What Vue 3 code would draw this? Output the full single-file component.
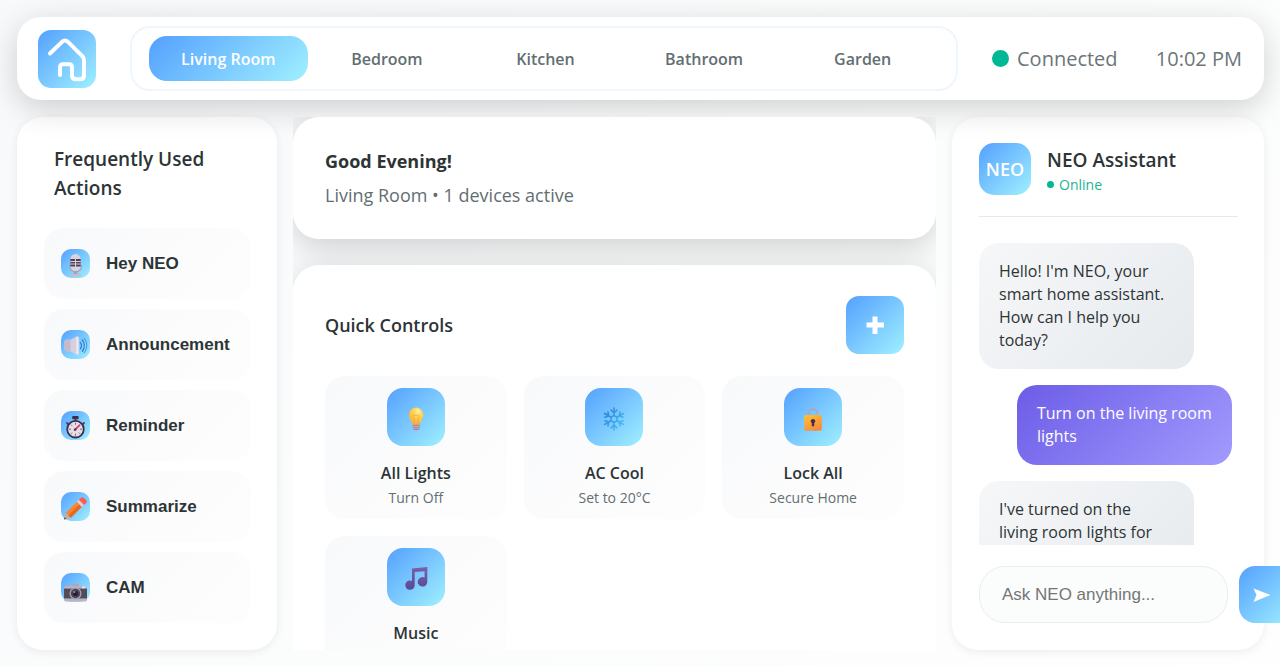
<script setup>
import { ref } from 'vue'

const rooms = ['Living Room', 'Bedroom', 'Kitchen', 'Bathroom', 'Garden']
const room = ref('Living Room')
const draft = ref('')

const actions = [
  { icon: 'mic', label: 'Hey NEO' },
  { icon: 'speaker', label: 'Announcement' },
  { icon: 'timer', label: 'Reminder' },
  { icon: 'pencil', label: 'Summarize' },
  { icon: 'camera', label: 'CAM' },
]

const controls = [
  { icon: 'bulb', title: 'All Lights', note: 'Turn Off' },
  { icon: 'snow', title: 'AC Cool', note: 'Set to 20°C' },
  { icon: 'lock', title: 'Lock All', note: 'Secure Home' },
  { icon: 'music', title: 'Music' },
]

const messages = [
  { from: 'neo', text: "Hello! I'm NEO, your smart home assistant. How can I help you today?" },
  { from: 'user', text: 'Turn on the living room lights' },
  { from: 'neo', text: "I've turned on the\nliving room lights for you." },
]
</script>

<template>
  <div class="app">
    <header class="topbar">
      <div class="logo">
        <svg viewBox="0 0 58 58" fill="none" stroke="#fff" stroke-width="4" stroke-linecap="round" stroke-linejoin="round">
          <path d="M12 23.5 24.3 11.6Q27 9.4 29.7 11.6L44.3 26.2Q46 28 46 30.5V45.5Q46 49.3 42.2 49.3H38Q34 49.3 34 45.5V37.5Q34 34.3 31 34.3H25Q22 34.3 22 37.5V45" />
        </svg>
      </div>
      <nav class="tabs">
        <button v-for="r in rooms" :key="r" class="tab" :class="{ active: r === room }" @click="room = r">{{ r }}</button>
      </nav>
      <div class="status">
        <span class="connection"><i class="dot"></i>Connected</span>
        <span>10:02 PM</span>
      </div>
    </header>

    <main class="columns">
      <aside class="panel sidebar">
        <h2>Frequently Used Actions</h2>
        <button v-for="a in actions" :key="a.label" class="action">
          <span class="action-icon">
            <svg v-if="a.icon === 'mic'" viewBox="0 0 29 29">
              <path d="M8.5 27.2q0-3 6-3t6 3z" fill="#c3bccb" />
              <rect x="12.8" y="20" width="3.4" height="5" fill="#a69fb0" />
              <path d="M8.500 16v1.500a6 5.500 0 0 0 12 0V16" fill="none" stroke="#a9a2b6" stroke-width="1.200" />
              <rect x="9.3" y="5" width="10.4" height="17" rx="5.2" fill="#d9d3dd" />
              <path d="M9.3 10h10.4v7.5H9.3z" fill="#4d4058" />
              <path d="M9.3 12.5h10.4M9.3 15h10.4M14.5 9.5V18" stroke="#d9d3dd" stroke-width="1" />
            </svg>
            <svg v-else-if="a.icon === 'speaker'" viewBox="0 0 29 29">
              <path d="M3.5 11.5q0-1.8 1.8-1.8h4.2l6.5-3.4q1.6-.5 1.6 1V24q0 1.6-1.6 1L9.500 21.300H5.300Q3.500 21.300 3.500 19.500z" fill="#d8cfde" />
              <path d="M3.500 11.500q0-1.800 1.800-1.800h4.200v11.600H5.300q-1.800 0-1.800-1.800z" fill="#c3bacb" />
              <path d="M15.300 7.500q1.500-1 2.300.500v15.600q-.8 1.300-2.300.3z" fill="#eee8f0" />
              <path d="M19.300 12.500q2.400 3 0 6.500M21.300 9.800q4.200 5.500 0 11.500" fill="none" stroke="#2676d2" stroke-width="1.200" stroke-linecap="round" />
              <path d="M23.200 8q5.600 7 0 15" fill="none" stroke="#3f93e4" stroke-width="1" stroke-linecap="round" />
            </svg>
            <svg v-else-if="a.icon === 'timer'" viewBox="0 0 29 29">
              <rect x="11.200" y="5" width="6.400" height="3.200" rx="1" fill="#373047" />
              <path d="M14.500 8v3M6 12l2 2M23 12l-2 2" stroke="#4b405c" stroke-width="1.800" stroke-linecap="round" />
              <circle cx="14.500" cy="18.200" r="8.300" fill="#e6dde9" stroke="#3a304a" stroke-width="1.800" />
              <path d="M14.500 11.700v2M14.500 22.700v2M8 18.200h2M19 18.200h2M9.900 13.600l1.200 1.200M9.900 22.800l1.200-1.200M19.100 22.800l-1.200-1.200" stroke="#64556f" stroke-width=".9" />
              <path d="m13.500 19.200 5.200-5" stroke="#e3355b" stroke-width="1.700" stroke-linecap="round" />
              <circle cx="14.300" cy="18.500" r="1.200" fill="#493955" />
            </svg>
            <svg v-else-if="a.icon === 'pencil'" viewBox="0 0 29 29">
              <path d="M3 27.500 5 21.500 9.300 25.700z" fill="#d9a783" />
              <path d="M3 27.500 3.700 25.200 5.400 26.800z" fill="#4d3850" />
              <path d="M4.400 21 17.200 8.400l5 5L9.600 26q-.6-2-2-2.400-.6-2-3.200-2.600z" fill="#f98732" />
              <path d="M7.200 23.500 19.800 11l2.400 2.400L9.600 26q-.6-2-2.400-2.500z" fill="#e76820" />
              <path d="m15.800 9.800 2.600-2.600 5.200 4.800-2.900 3z" fill="#d9d1df" />
              <path d="m17.800 7.800 2.200-2q1.300-1.300 2.700 0l2.600 2.500q1.300 1.300 0 2.600l-2.200 2.100z" fill="#fb5c4f" />
            </svg>
            <svg v-else viewBox="0 0 29 29">
              <path d="M5 13.500v-1.200h4v1.200M11 13l1.200-2.200h5L18.500 13" fill="#aea6b7" />
              <rect x="3" y="13" width="23" height="15.500" rx="1.800" fill="#b9b3c2" />
              <path d="M3 15.600h23v9.800H3z" fill="#514c58" />
              <rect x="21" y="13.600" width="3.500" height="1.600" rx=".6" fill="#e9e3ed" />
              <circle cx="14.500" cy="20.500" r="6" fill="#a8a0b2" />
              <circle cx="14.500" cy="20.500" r="4.700" fill="#4b4458" />
              <circle cx="14.500" cy="20.500" r="2.600" fill="#252033" />
              <circle cx="13.300" cy="19" r="1.100" fill="#9b8fb0" />
            </svg>
          </span>
          {{ a.label }}
        </button>
      </aside>

      <section class="center">
        <div class="card greeting">
          <h1>Good Evening!</h1>
          <p>{{ room }} • 1 devices active</p>
        </div>
        <div class="card quick">
          <div class="quick-head">
            <h2>Quick Controls</h2>
            <button class="add" aria-label="Add control">
              <svg viewBox="0 0 58 58"><path d="M26.500 20.500h5v6h6.500v5h-6.500v6.500h-5v-6.500h-6v-5h6z" fill="#fff" /></svg>
            </button>
          </div>
          <div class="grid">
            <button v-for="c in controls" :key="c.title" class="tile">
              <span class="tile-icon">
                <svg v-if="c.icon === 'bulb'" viewBox="0 0 58 58">
                  <defs>
                    <radialGradient id="bulb-glass" cx=".62" cy=".25" r=".75">
                      <stop offset="0" stop-color="#fff5b5" /><stop offset=".35" stop-color="#ffd75b" /><stop offset="1" stop-color="#f7ae37" />
                    </radialGradient>
                  </defs>
                  <path d="M21.800 26.800a7.300 7.300 0 0 1 14.600 0c0 4-2.800 5.200-3.500 10h-7.500c-.7-4.800-3.600-6-3.600-10z" fill="url(#bulb-glass)" />
                  <path d="M27.300 36v-6q-2-1.600-.5-3 1.300-.8 2.300.8 1-1.600 2.300-.8 1.500 1.400-.5 3v6" fill="none" stroke="#f5a030" stroke-width=".8" />
                  <path d="M25.500 36.800h7.300v3q0 2.500-3.600 2.500t-3.700-2.500z" fill="#a487a6" />
                  <path d="M25.500 38.300h7.300M25.700 40.200h6.900" stroke="#d2b7ca" stroke-width=".7" />
                </svg>
                <svg v-else-if="c.icon === 'snow'" viewBox="0 0 58 58" fill="none" stroke-width="1.600" stroke-linecap="round">
                  <defs>
                    <linearGradient id="ice" x1="-9" y1="-6" x2="10" y2="8" gradientUnits="userSpaceOnUse">
                      <stop stop-color="#2b82dd" /><stop offset="1" stop-color="#4cc4f6" />
                    </linearGradient>
                  </defs>
                  <path
                    transform="translate(29 31)"
                    stroke="url(#ice)"
                    d="M0-3.500V-11M0-6l-3-2.800M0-6l3-2.800M0 3.500V11M0 6l-3 2.800M0 6l3 2.800M3-1.800l6.500-3.700M5.200-3l.9-4M5.200-3l3.900 1.200M-3 1.800l-6.500 3.700M-5.200 3l-.9 4M-5.200 3l-3.900-1.200M3 1.800l6.500 3.700M5.200 3l.9 4M5.200 3l3.900-1.200M-3-1.800l-6.500-3.700M-5.200-3l-.9-4M-5.200-3l-3.900 1.200M0-3.500l3 1.700v3.600L0 3.500l-3-1.700v-3.600z"
                  />
                </svg>
                <svg v-else-if="c.icon === 'lock'" viewBox="0 0 58 58">
                  <defs>
                    <linearGradient id="brass" x1="0" y1="0" x2=".6" y2="1">
                      <stop stop-color="#ffc62e" /><stop offset="1" stop-color="#f78a3e" />
                    </linearGradient>
                  </defs>
                  <path d="M24.500 28v-2.500a4.500 4.500 0 0 1 9 0V28" fill="none" stroke="#b6a4bd" stroke-width="1.800" />
                  <rect x="20.200" y="27" width="17.600" height="15.700" rx="1.800" fill="url(#brass)" />
                  <path d="M29 31a2.200 2.200 0 0 1 1.200 4.100v3.200h-2.400v-3.200A2.200 2.200 0 0 1 29 31z" fill="#4a2a4e" />
                </svg>
                <svg v-else viewBox="0 0 58 58">
                  <defs>
                    <linearGradient id="note" x1="0" y1="0" x2="0" y2="1">
                      <stop stop-color="#7a60a8" /><stop offset="1" stop-color="#584a94" />
                    </linearGradient>
                  </defs>
                  <path d="M25 20.500 40.300 19v14.800a4.800 4.800 0 1 1-2.700-4.300v-6.300L27.700 24v13.200a4.700 4.700 0 1 1-2.700-4.300z" fill="url(#note)" />
                </svg>
              </span>
              <strong>{{ c.title }}</strong>
              <small v-if="c.note">{{ c.note }}</small>
            </button>
          </div>
        </div>
      </section>

      <aside class="panel assistant">
        <div class="assistant-head">
          <div class="avatar">NEO</div>
          <div>
            <h2>NEO Assistant</h2>
            <p class="online"><i></i>Online</p>
          </div>
        </div>
        <div class="messages">
          <p v-for="(m, i) in messages" :key="i" class="message" :class="m.from">{{ m.text }}</p>
        </div>
        <form class="composer" @submit.prevent="draft = ''">
          <input v-model="draft" type="text" aria-label="Message to NEO" placeholder="Ask NEO anything..." />
          <button class="send" aria-label="Send">
            <svg viewBox="0 0 57 57"><path d="M14.500 22.500 31.500 29 14.500 36l3-7z" fill="#fff" /></svg>
          </button>
        </form>
      </aside>
    </main>
  </div>
</template>

<style>
body {
  overflow: hidden;
}
</style>

<style scoped>
* {
  box-sizing: border-box;
}

.app {
  --blue: linear-gradient(135deg, #54a0ff, #a0f0ff);
  --soft: linear-gradient(135deg, #f8f9fb, #fdfdfd 85%);
  height: 100vh;
  display: flex;
  flex-direction: column;
  gap: 17px;
  padding: 17px 16px 16px 17px;
  background: linear-gradient(135deg, #f8f9fb, #fbfcfc 50%, #fefefe);
  color: #2d3436;
  font-family: "Open Sans", "Noto Sans", sans-serif;
}

h1,
h2,
p {
  margin: 0;
}

h2 {
  font-weight: 600;
}

button {
  border: 0;
  padding: 0;
  color: inherit;
  cursor: pointer;
}

svg {
  display: block;
  width: 100%;
}

.topbar {
  position: relative;
  display: flex;
  align-items: center;
  gap: 34px;
  padding: 9px 22px 9px 21px;
  border-radius: 24px;
  background: #fff;
  box-shadow: 0 8px 32px rgba(0, 0, 0, 0.18);
}

.logo {
  width: 58px;
  height: 58px;
  border-radius: 13px;
  background: var(--blue);
}

.tabs {
  flex: 1;
  display: flex;
  padding: 8px 14px 8px 17px;
  border: 2px solid #f0f6fd;
  border-radius: 20px;
}

.tab {
  flex: 1;
  height: 45px;
  border-radius: 18px;
  background: none;
  color: #636e72;
  font: 600 16px "Open Sans", "Noto Sans", sans-serif;
}

.tab.active {
  background: var(--blue);
  color: #fff;
}

.status {
  width: 250px;
  display: flex;
  justify-content: space-between;
  color: #6c757a;
  font-size: 20px;
}

.connection {
  display: flex;
  align-items: center;
  gap: 8px;
}

.dot {
  width: 17px;
  height: 17px;
  border-radius: 50%;
  background: #00b894;
}

.columns {
  flex: 1;
  min-height: 0;
  display: grid;
  grid-template-columns: 260px minmax(0, 1fr) 312px;
  grid-template-rows: minmax(0, 1fr);
  gap: 16px;
}

.panel {
  border-radius: 26px;
  background: #fff;
  box-shadow: 0 2px 10px rgba(0, 0, 0, 0.07);
}

.sidebar {
  display: flex;
  flex-direction: column;
  gap: 10px;
  padding: 28px 26px 27px 27px;
}

.sidebar h2 {
  padding: 0 10px;
  margin-bottom: 15px;
  font-size: 19px;
  line-height: 29px;
}

.action {
  height: 71px;
  flex: none;
  display: flex;
  align-items: center;
  gap: 16px;
  padding: 0 17px;
  border-radius: 20px;
  background: var(--soft);
  font: bold 17px "Liberation Sans", Arial, sans-serif;
}

.action-icon {
  width: 29px;
  height: 29px;
  border-radius: 10px;
  background: var(--blue);
}

.center {
  position: relative;
  overflow: hidden;
  display: flex;
  flex-direction: column;
  gap: 26px;
}

.card {
  flex: none;
  border-radius: 26px;
  background: #fff;
  box-shadow: 0 8px 32px rgba(0, 0, 0, 0.18);
}

.greeting {
  padding: 30px 32px;
}

.greeting h1 {
  font-size: 18px;
  line-height: 28px;
}

.greeting p {
  margin-top: 6px;
  color: #636e72;
  font-size: 18px;
  line-height: 28px;
}

.quick {
  position: relative;
  padding: 31px 32px;
}

.quick-head {
  display: flex;
  align-items: center;
  justify-content: space-between;
  margin-bottom: 22px;
}

.quick-head h2 {
  font-size: 18px;
}

.add {
  width: 58px;
  height: 58px;
  border-radius: 13px;
  background: var(--blue);
}

.grid {
  display: grid;
  grid-template-columns: repeat(3, 1fr);
  gap: 17px;
}

.tile {
  height: 143px;
  display: flex;
  flex-direction: column;
  align-items: center;
  padding-top: 12px;
  border-radius: 20px;
  background: var(--soft);
  font-family: "Open Sans", "Noto Sans", sans-serif;
}

.tile-icon {
  width: 58px;
  height: 58px;
  border-radius: 16px;
  background: var(--blue);
}

.tile strong {
  margin-top: 14px;
  font-size: 16px;
  font-weight: 600;
  line-height: 26px;
}

.tile small {
  color: #636e72;
  font-size: 14px;
  line-height: 24px;
}

.assistant {
  display: flex;
  flex-direction: column;
  padding: 26px 26px 27px 27px;
}

.assistant-head {
  display: flex;
  gap: 16px;
  padding-bottom: 21px;
  border-bottom: 1px solid #e6e9ea;
}

.avatar {
  width: 52px;
  height: 52px;
  border-radius: 15px;
  background: var(--blue);
  color: #fff;
  font-size: 18px;
  font-weight: 600;
  line-height: 52px;
  text-align: center;
}

.assistant-head h2 {
  font-size: 19px;
  line-height: 34px;
}

.online {
  display: flex;
  align-items: center;
  gap: 5px;
  color: #1cb491;
  font-size: 14px;
  line-height: 15px;
}

.online i {
  width: 7px;
  height: 7px;
  border-radius: 50%;
  background: #00b894;
}

.messages {
  flex: 1;
  min-height: 0;
  overflow: hidden;
  display: flex;
  flex-direction: column;
  gap: 16px;
  margin-top: 26px;
  padding-right: 6px;
}

.message {
  flex: none;
  width: 85%;
  padding: 17px 16px 17px 20px;
  border-radius: 20px;
  font-size: 16px;
  line-height: 23px;
  white-space: pre-line;
}

.message.neo {
  background: linear-gradient(135deg, #f6f7f9, #e6eaed);
}

.message.user {
  align-self: flex-end;
  background: linear-gradient(135deg, #6c5ce7, #a29bfe);
  color: #fff;
}

.composer {
  display: flex;
  gap: 11px;
  margin-top: 21px;
}

.composer input {
  width: 249px;
  height: 57px;
  flex: none;
  padding: 0 22px;
  border: 1px solid #e8eeef;
  border-radius: 26px;
  background: #fbfdfd;
  font: 17px "Liberation Sans", Arial, sans-serif;
}

.composer input::placeholder {
  color: #757575;
}

.send {
  width: 57px;
  height: 57px;
  flex: none;
  border-radius: 16px;
  background: var(--blue);
}
</style>
